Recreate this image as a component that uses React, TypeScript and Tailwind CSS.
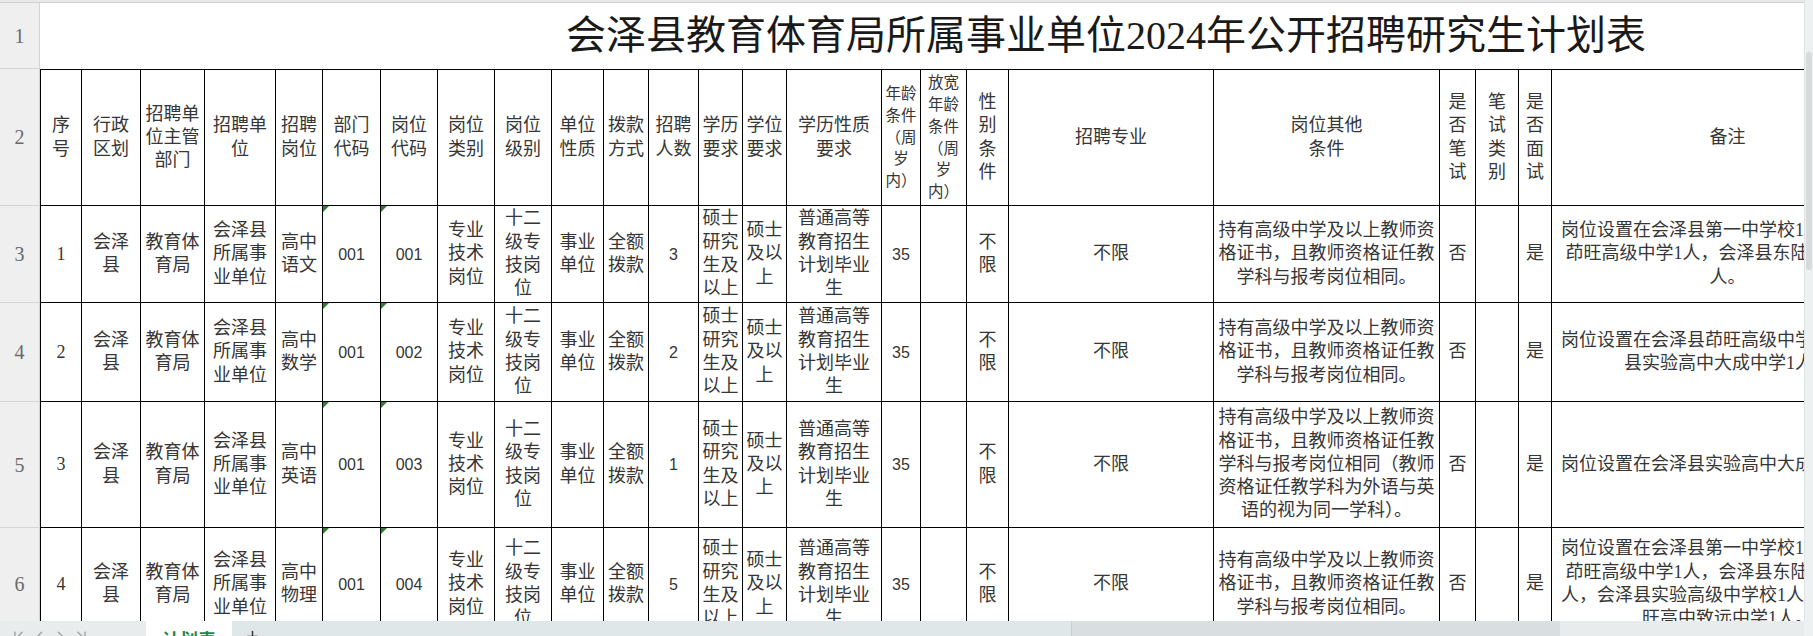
import React from 'react';
import { ChevronFirst, ChevronLeft, ChevronRight, ChevronLast, Plus } from 'lucide-react';

type CellData = string | { t: string; k?: 'num' | 'seq' | 'small'; tri?: boolean };

const GRID =
  'grid grid-cols-[42px_59px_64px_71px_47px_58px_57px_57px_57px_52px_45px_50px_44px_44px_95px_39px_46px_42px_205px_226px_36px_43px_33px_352px]';

const header: CellData[] = [
  '序\n号',
  '行政\n区划',
  '招聘单\n位主管\n部门',
  '招聘单\n位',
  '招聘\n岗位',
  '部门\n代码',
  '岗位\n代码',
  '岗位\n类别',
  '岗位\n级别',
  '单位\n性质',
  '拨款\n方式',
  '招聘\n人数',
  '学历\n要求',
  '学位\n要求',
  '学历性质\n要求',
  { t: '年龄\n条件\n（周\n岁\n内）', k: 'small' },
  { t: '放宽\n年龄\n条件\n（周\n岁\n内）', k: 'small' },
  '性\n别\n条\n件',
  '招聘专业',
  '岗位其他\n条件',
  '是\n否\n笔\n试',
  '笔\n试\n类\n别',
  '是\n否\n面\n试',
  '备注',
];

const COND = '持有高级中学及以上教师资\n格证书，且教师资格证任教\n学科与报考岗位相同。';
const COND_EN =
  '持有高级中学及以上教师资\n格证书，且教师资格证任教\n学科与报考岗位相同（教师\n资格证任教学科为外语与英\n语的视为同一学科）。';

const makeRow = (seq: string, subject: string, code: string, count: string, cond: string, note: string): CellData[] => [
  { t: seq, k: 'seq' },
  '会泽\n县',
  '教育体\n育局',
  '会泽县\n所属事\n业单位',
  subject,
  { t: '001', k: 'num', tri: true },
  { t: code, k: 'num', tri: true },
  '专业\n技术\n岗位',
  '十二\n级专\n技岗\n位',
  '事业\n单位',
  '全额\n拨款',
  { t: count, k: 'num' },
  '硕士\n研究\n生及\n以上',
  '硕士\n及以\n上',
  '普通高等\n教育招生\n计划毕业\n生',
  { t: '35', k: 'num' },
  '',
  '不\n限',
  '不限',
  cond,
  '否',
  '',
  '是',
  note,
];

const rows = [
  {
    n: 3,
    h: 'h-[97px]',
    cells: makeRow('1', '高中\n语文', '001', '3', COND,
      '岗位设置在会泽县第一中学校1人，会泽县\n茚旺高级中学1人，会泽县东陆高级中学1\n人。'),
  },
  {
    n: 4,
    h: 'h-[99px]',
    cells: makeRow('2', '高中\n数学', '002', '2', COND,
      '岗位设置在会泽县茚旺高级中学1人，会泽\n县实验高中大成中学1人。'),
  },
  {
    n: 5,
    h: 'h-[126px]',
    cells: makeRow('3', '高中\n英语', '003', '1', COND_EN, '岗位设置在会泽县实验高中大成中学1人。'),
  },
  {
    n: 6,
    h: 'h-[113px]',
    cells: makeRow('4', '高中\n物理', '004', '5', COND,
      '岗位设置在会泽县第一中学校1人，会泽县\n茚旺高级中学1人，会泽县东陆高级中学1\n人，会泽县实验高级中学校1人，会泽县茚\n旺高中致远中学1人。'),
  },
];

const RowHead = ({ n }: { n: number }) => (
  <div className="w-[40px] shrink-0 flex items-center justify-center bg-[#efefef] border-r border-b border-[#d4d4d4] text-[20px] text-[#6a6a6a]">
    {n}
  </div>
);

const Cell = ({ c }: { c: CellData }) => {
  const d = typeof c === 'string' ? { t: c } : c;
  let text = 'text-[18px] leading-[23.3px]';
  if (d.k === 'num') text = "text-[16px] leading-[23px] font-['Liberation_Sans','Noto_Sans_CJK_SC',sans-serif]";
  if (d.k === 'seq') text = 'text-[18px] leading-[23px]';
  if (d.k === 'small') text = 'text-[15.5px] leading-[21.7px]';
  return (
    <div className={`relative flex items-center justify-center border-r border-black first:border-l text-center whitespace-pre text-[#363636] ${text}`}>
      {d.tri && (
        <span className="absolute left-0 top-0 border-t-[6px] border-r-[6px] border-t-[#2e7d32] border-r-transparent" />
      )}
      {d.t}
    </div>
  );
};

const TableRow = ({ n, h, cells, top }: { n: number; h: string; cells: CellData[]; top?: boolean }) => (
  <div className={`flex shrink-0 ${h}`}>
    <RowHead n={n} />
    <div className={`${GRID} shrink-0 border-b border-black ${top ? 'border-t' : ''}`}>
      {cells.map((c, i) => (
        <Cell key={i} c={c} />
      ))}
    </div>
  </div>
);

export default function App() {
  return (
    <div className="w-[1813px] h-[636px] overflow-hidden bg-white flex flex-col font-['Liberation_Serif','Noto_Sans_CJK_SC',serif]">
      {/* sheet */}
      <div className="flex h-[621px] shrink-0">
        <div className="flex-1 min-w-0 overflow-hidden flex flex-col">
          <div className="h-[3px] shrink-0 bg-[#e8e8e8] border-b border-[#d0d0d0]" />
          <div className="flex h-[66px] shrink-0">
            <RowHead n={1} />
            <div className="flex-1 flex items-center pl-[526px] whitespace-nowrap text-[40px] text-[#1a1a1a]">
              会泽县教育体育局所属事业单位2024年公开招聘研究生计划表
            </div>
          </div>
          <TableRow n={2} h="h-[137px]" cells={header} top />
          {rows.map((r) => (
            <TableRow key={r.n} n={r.n} h={r.h} cells={r.cells} />
          ))}
        </div>
        {/* vertical scrollbar */}
        <div className="w-[9px] shrink-0 flex flex-col items-center pt-[52px] bg-[#eef1f1] border-l border-[#dfe3e3]">
          <div className="w-[6px] h-[218px] rounded-full bg-[#d6dbdc]" />
        </div>
      </div>

      {/* sheet tabs */}
      <div className="h-[36px] shrink-0 flex bg-[#e0e7e9]">
        <div className="w-[146px] flex items-start gap-[4px] pl-[10px] pt-[7px] bg-[#e9ecec] text-[#a3a3a3]">
          <ChevronFirst size={17} />
          <ChevronLeft size={17} />
          <ChevronRight size={17} />
          <ChevronLast size={17} />
        </div>
        <div className="w-[86px] bg-white pt-[5px] text-center text-[18px] font-bold text-[#1d8a4c] font-['Noto_Sans_CJK_SC',sans-serif]">
          计划表
        </div>
        <div className="pl-[12px] pt-[7px] text-[#333]">
          <Plus size={17} />
        </div>
        <div className="flex-1" />
        <div className="w-[733px] flex bg-[#e8ecec] border-l border-[#c9cfd0]">
          <div className="w-[488px] bg-[#d9dfe0]" />
        </div>
        <div className="w-[9px] bg-[#eef1f1]" />
      </div>
    </div>
  );
}
